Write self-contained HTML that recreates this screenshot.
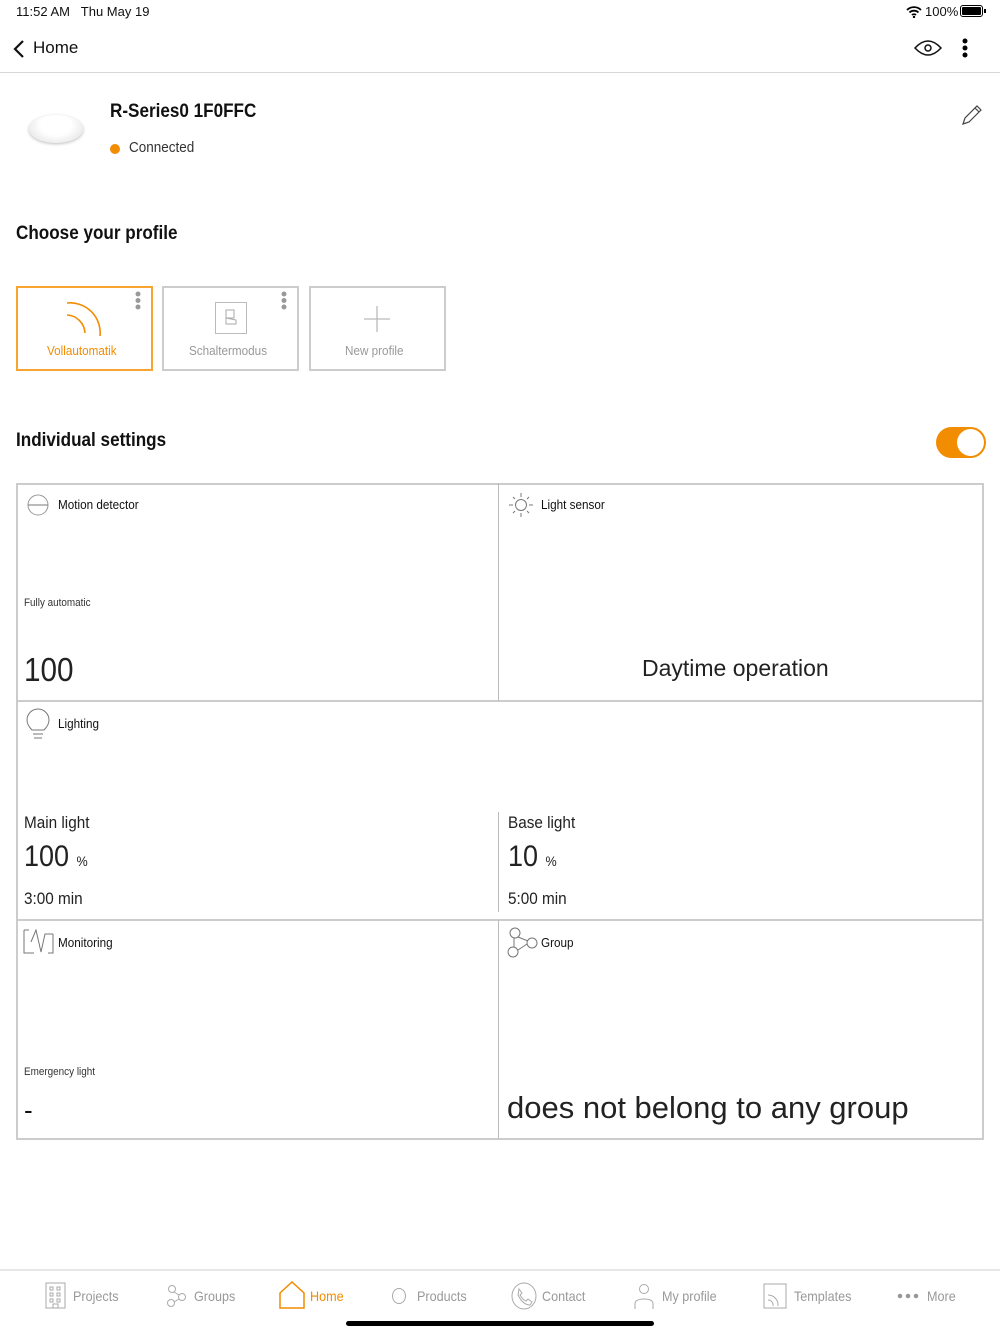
<!DOCTYPE html>
<html><head><meta charset="utf-8"><style>
*{margin:0;padding:0;box-sizing:border-box}
body{width:1000px;height:1334px;background:#fff;font-family:"Liberation Sans",sans-serif;color:#111;position:relative;overflow:hidden}
.a{position:absolute;white-space:nowrap}
.c{transform:scaleX(.9);transform-origin:left center}
.g{color:#999}
</style></head><body>
<div class="a" style="left:16px;top:4px;font-size:13px">11:52 AM&nbsp;&nbsp;&nbsp;Thu May 19</div>
<svg class="a" style="left:906px;top:6px" width="16" height="12" viewBox="0 0 16 12"><path d="M1 4a10 10 0 0 1 14 0M3.5 6.5a6.5 6.5 0 0 1 9 0M6 9a3 3 0 0 1 4 0" stroke="#000" stroke-width="1.8" fill="none"/><circle cx="8" cy="11" r="1.2"/></svg>
<div class="a" style="left:925px;top:4px;font-size:13px">100%</div>
<div class="a" style="left:960px;top:5px;width:23px;height:12px;border:1px solid #000;border-radius:3px;padding:1px"><div style="background:#000;width:100%;height:100%;border-radius:1px"></div></div>
<div class="a" style="left:984px;top:9px;width:2px;height:4px;background:#000"></div>
<svg class="a" style="left:12px;top:39px" width="14" height="20"><path d="M11 2L3 10l8 8" stroke="#111" stroke-width="2.2" fill="none"/></svg>
<div class="a" style="left:33px;top:38px;font-size:17px">Home</div>
<svg class="a" style="left:913px;top:37px" width="30" height="22"><path d="M2 11Q15 -3 28 11Q15 25 2 11Z" stroke="#111" stroke-width="1.5" fill="none"/><circle cx="15" cy="11" r="3" stroke="#111" stroke-width="1.5" fill="none"/></svg>
<svg class="a" style="left:960px;top:38px" width="10" height="22"><circle cx="5" cy="3" r="2.5"/><circle cx="5" cy="10" r="2.5"/><circle cx="5" cy="17" r="2.5"/></svg>
<div class="a" style="left:0;top:72px;width:1000px;height:1px;background:#d8d8d8"></div>
<div class="a" style="left:29px;top:115px;width:54px;height:28px;border-radius:50%;background:radial-gradient(ellipse at 50% 35%,#fff 40%,#ddd 100%);box-shadow:0 1px 3px #bbb"></div>
<div class="a c" style="left:110px;top:101px;font-size:19px;font-weight:bold">R-Series0 1F0FFC</div>
<div class="a" style="left:110px;top:144px;width:10px;height:10px;border-radius:50%;background:#f28c00"></div>
<div class="a c" style="left:129px;top:139px;font-size:15px;color:#333">Connected</div>
<svg class="a" style="left:960px;top:103px" width="24" height="24"><path d="M3 21l2-6L17 3l4 4L9 19z M15 5l4 4" stroke="#444" stroke-width="1.2" fill="none"/></svg>
<div class="a c" style="left:16px;top:223px;font-size:19px;font-weight:bold">Choose your profile</div>
<div class="a" style="left:16px;top:286px;width:137px;height:85px;border:2px solid #f7a431"></div>
<svg class="a" style="left:60px;top:296px" width="45" height="45"><path d="M7 7A30 30 0 0 1 40 40M7 19A19 19 0 0 1 25 37" stroke="#f28c00" stroke-width="1.6" fill="none"/></svg>
<svg class="a" style="left:134px;top:290px" width="8" height="22" fill="#999"><circle cx="4" cy="4" r="2.5"/><circle cx="4" cy="10.5" r="2.5"/><circle cx="4" cy="17" r="2.5"/></svg>
<div class="a c" style="left:47px;top:343px;font-size:13px;color:#f28c00">Vollautomatik</div>
<div class="a" style="left:162px;top:286px;width:137px;height:85px;border:2px solid #ccc"></div>
<div class="a" style="left:215px;top:302px;width:32px;height:32px;border:1.5px solid #bbb"></div>
<svg class="a" style="left:224px;top:309px" width="14" height="18"><path d="M2 1h8v8H2z M2 9l10 2v4H2z" stroke="#aaa" fill="none"/></svg>
<svg class="a" style="left:280px;top:290px" width="8" height="22" fill="#999"><circle cx="4" cy="4" r="2.5"/><circle cx="4" cy="10.5" r="2.5"/><circle cx="4" cy="17" r="2.5"/></svg>
<div class="a c g" style="left:189px;top:343px;font-size:13px">Schaltermodus</div>
<div class="a" style="left:309px;top:286px;width:137px;height:85px;border:2px solid #ccc"></div>
<svg class="a" style="left:364px;top:306px" width="26" height="26"><path d="M13 0v26M0 13h26" stroke="#bbb" stroke-width="1.3"/></svg>
<div class="a c g" style="left:345px;top:343px;font-size:13px">New profile</div>
<div class="a c" style="left:16px;top:430px;font-size:19px;font-weight:bold">Individual settings</div>
<div class="a" style="left:936px;top:427px;width:50px;height:31px;border-radius:16px;background:#f28c00"><div style="position:absolute;right:2px;top:2px;width:27px;height:27px;border-radius:50%;background:#fff"></div></div>
<div class="a" style="left:16px;top:483px;width:968px;height:657px;border:2px solid #ccc;border-top-width:2px"></div>
<div class="a" style="left:16px;top:700px;width:968px;height:2px;background:#ccc"></div>
<div class="a" style="left:16px;top:919px;width:968px;height:2px;background:#ccc"></div>
<div class="a" style="left:498px;top:483px;width:1px;height:218px;background:#bbb"></div>
<div class="a" style="left:498px;top:812px;width:1px;height:100px;background:#bbb"></div>
<div class="a" style="left:498px;top:920px;width:1px;height:219px;background:#bbb"></div>
<svg class="a" style="left:27px;top:494px" width="24" height="22"><circle cx="11" cy="11" r="10" stroke="#999" fill="none"/><path d="M1 11h20" stroke="#777"/></svg>
<div class="a c" style="left:58px;top:497px;font-size:13px">Motion detector</div>
<div class="a c" style="left:24px;top:597px;font-size:11px;color:#333">Fully automatic</div>
<div class="a c" style="left:24px;top:651px;font-size:33px;color:#222">100</div>
<svg class="a" style="left:507px;top:491px" width="28" height="28" stroke="#777" fill="none"><circle cx="14" cy="14" r="5.5"/><path d="M14 2v4M14 22v4M2 14h4M22 14h4M6 6l2 2M20 20l2 2M6 22l2-2M20 8l2-2"/></svg>
<div class="a c" style="left:541px;top:497px;font-size:13px">Light sensor</div>
<div class="a" style="left:642px;top:655px;font-size:23px;color:#222">Daytime operation</div>
<svg class="a" style="left:26px;top:708px" width="24" height="32" stroke="#777" fill="none"><path d="M6 22Q1 17 1 12A11 11 0 0 1 23 12Q23 17 18 22Z"/><path d="M7 26h10M8 30h8"/></svg>
<div class="a c" style="left:58px;top:716px;font-size:13px">Lighting</div>
<div class="a c" style="left:24px;top:813px;font-size:17px;color:#222">Main light</div>
<div class="a c" style="left:24px;top:840px;font-size:30px;color:#222">100 <span style="font-size:14px">%</span></div>
<div class="a c" style="left:24px;top:889px;font-size:17px;color:#222">3:00 min</div>
<div class="a c" style="left:508px;top:813px;font-size:17px;color:#222">Base light</div>
<div class="a c" style="left:508px;top:840px;font-size:30px;color:#222">10 <span style="font-size:14px">%</span></div>
<div class="a c" style="left:508px;top:889px;font-size:17px;color:#222">5:00 min</div>
<svg class="a" style="left:23px;top:929px" width="31" height="25" stroke="#777" fill="none"><path d="M1 1h5M1 1v23h10M30 5v19h-5M8 13l5-12 5 22 4-18h8"/></svg>
<div class="a c" style="left:58px;top:935px;font-size:13px">Monitoring</div>
<div class="a c" style="left:24px;top:1066px;font-size:11px;color:#333">Emergency light</div>
<div class="a" style="left:24px;top:1095px;font-size:26px">-</div>
<svg class="a" style="left:506px;top:926px" width="32" height="32" stroke="#777" fill="none"><circle cx="9" cy="7" r="5"/><circle cx="26" cy="17" r="5"/><circle cx="7" cy="26" r="5"/><path d="M12 11l10 4M21 18l-9 6M8 12v9"/></svg>
<div class="a c" style="left:541px;top:935px;font-size:13px">Group</div>
<div class="a" style="left:507px;top:1090px;font-size:31px;color:#222">does not belong to any group</div>
<div class="a" style="left:0;top:1269px;width:1000px;height:2px;background:#e6e6e6"></div>
<svg class="a" style="left:44px;top:1282px" width="24" height="27" stroke="#aaa" fill="none"><path d="M2 1h19v25H2zM6 5h3v3H6zM13 5h3v3h-3zM6 11h3v3H6zM13 11h3v3h-3zM6 17h3v3H6zM13 17h3v3h-3zM9 26v-4h5v4"/></svg>
<div class="a c g" style="left:73px;top:1288px;font-size:14px">Projects</div>
<svg class="a" style="left:165px;top:1284px" width="22" height="24" stroke="#aaa" fill="none"><circle cx="7" cy="5" r="3.5"/><circle cx="17" cy="13" r="3.5"/><circle cx="6" cy="19" r="3.5"/><path d="M9 8l5 3M14 15l-5 3"/></svg>
<div class="a c g" style="left:194px;top:1288px;font-size:14px">Groups</div>
<svg class="a" style="left:279px;top:1281px" width="26" height="28" stroke="#f28c00" stroke-width="1.5" fill="none"><path d="M1 12L13 1l12 11v15H1z"/></svg>
<div class="a c" style="left:310px;top:1288px;font-size:14px;color:#f28c00">Home</div>
<svg class="a" style="left:391px;top:1287px" width="16" height="18" stroke="#aaa" fill="none"><ellipse cx="8" cy="9" rx="6.5" ry="7.5"/></svg>
<div class="a c g" style="left:417px;top:1288px;font-size:14px">Products</div>
<svg class="a" style="left:511px;top:1282px" width="26" height="28" stroke="#aaa" fill="none"><ellipse cx="13" cy="14" rx="12" ry="13"/><path d="M8 7l3 4-2 2q3 5 6 6l2-2 4 3-2 3q-7 0-12-10z"/></svg>
<div class="a c g" style="left:542px;top:1288px;font-size:14px">Contact</div>
<svg class="a" style="left:633px;top:1283px" width="22" height="26" stroke="#aaa" fill="none"><circle cx="11" cy="6" r="4.5"/><path d="M2 26v-5q0-5 9-5 9 0 9 5v5"/></svg>
<div class="a c g" style="left:662px;top:1288px;font-size:14px">My profile</div>
<svg class="a" style="left:763px;top:1283px" width="24" height="26" stroke="#aaa" fill="none"><path d="M1 1h22v24H1z"/><path d="M5 12a10 10 0 0 1 10 11M5 17a5 5 0 0 1 5 6"/></svg>
<div class="a c g" style="left:794px;top:1288px;font-size:14px">Templates</div>
<svg class="a" style="left:897px;top:1292px" width="22" height="8" fill="#999"><circle cx="3" cy="4" r="2.3"/><circle cx="11" cy="4" r="2.3"/><circle cx="19" cy="4" r="2.3"/></svg>
<div class="a c g" style="left:927px;top:1288px;font-size:14px">More</div>
<div class="a" style="left:346px;top:1321px;width:308px;height:5px;border-radius:3px;background:#000"></div>
</body></html>
